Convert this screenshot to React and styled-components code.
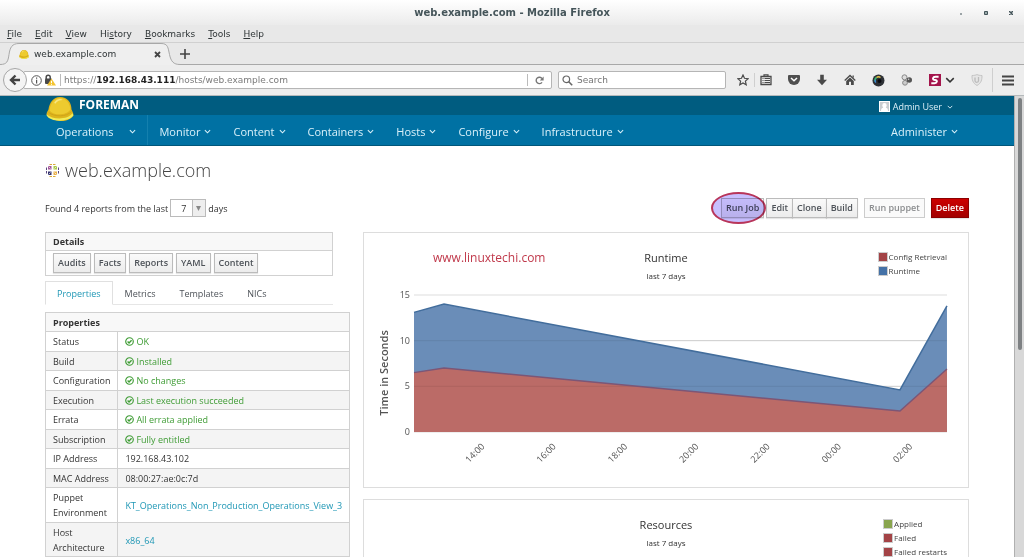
import React from 'react';
import styled, { createGlobalStyle, css } from 'styled-components';

const GlobalStyle = createGlobalStyle`
  * {
    box-sizing: border-box;
  }

  body {
    margin: 0;
    background: #fff;
    color: #333;
    font-family: "Open Sans", "Noto Sans", sans-serif;
    font-size: 9px;
    line-height: 15px;
    overflow: hidden;
  }

  button, input, select {
    font: inherit;
    color: inherit;
    margin: 0;
  }

  a {
    text-decoration: none;
  }
`;

/* ---------- browser window ---------- */

const Window = styled.div`
  display: flex;
  flex-direction: column;
  height: 100vh;
`;

const Chrome = styled.header`
  flex: none;
  background: #e8e8e8;
  border-bottom: 1px solid #b4b9bb;
  color: #2e3436;
  font-family: "DejaVu Sans", sans-serif;
  font-size: 9px;
`;

const TitleBar = styled.div`
  display: grid;
  grid-template-columns: 1fr auto 1fr;
  align-items: center;
  height: 25px;
  background: linear-gradient(#fff, #ebebeb);
`;

const WindowTitle = styled.h1`
  grid-column: 2;
  margin: 0;
  color: #45555a;
  font-size: 10px;
  font-weight: bold;
`;

const WindowControls = styled.div`
  display: flex;
  justify-content: flex-end;
  gap: 13px;
  padding-right: 7px;
`;

const ControlButton = styled.button`
  display: flex;
  align-items: center;
  justify-content: center;
  width: 12px;
  height: 12px;
  padding: 0;
  border: 0;
  background: none;
`;

const MenuBar = styled.nav`
  display: flex;
  gap: 13px;
  height: 18px;
  padding: 0 7px;
  border-bottom: 1px solid #d0d0d0;
`;

const MenuItem = styled.button`
  padding: 0;
  border: 0;
  background: none;
  line-height: 16px;
`;

const TabStrip = styled.div`
  display: flex;
  align-items: flex-end;
  height: 22px;
`;

const TabEdge = styled.svg`
  flex: none;
  width: 19px;
  height: 22px;
`;

const BrowserTab = styled.div`
  display: flex;
  align-items: center;
  width: 142px;
  height: 22px;
  border-top: 1px solid #a8a8a8;
  background: #efefef;
`;

const TabTitle = styled.span`
  flex: 1;
  margin-left: 5px;
`;

const TabButton = styled.button`
  display: flex;
  align-items: center;
  height: 22px;
  padding: 0;
  border: 0;
  background: none;
`;

const StripRest = styled.div`
  display: flex;
  flex: 1;
  height: 22px;
  border-bottom: 1px solid #a8a8a8;
`;

const Toolbar = styled.div`
  display: flex;
  align-items: center;
  height: 30px;
  padding: 0 10px 0 3px;
  background: #ededed;
`;

const BackButton = styled.button`
  display: flex;
  align-items: center;
  justify-content: center;
  flex: none;
  width: 24px;
  height: 24px;
  padding: 0;
  border: 1px solid #a6a6a6;
  border-radius: 50%;
  background: #f4f4f4;
  z-index: 1;
`;

const Field = styled.div`
  display: flex;
  align-items: center;
  height: 18px;
  border: 1px solid #b5b5b5;
  border-radius: 2px;
  background: #fff;
`;

const AddressField = styled(Field)`
  flex: 1;
  gap: 2px;
  margin-left: -4px;
  padding-left: 7px;
`;

const Address = styled.div`
  flex: 1;
  margin-left: 2px;
  padding-left: 3px;
  border-left: 1px solid #bbb;
  color: #7b7b7b;
  line-height: 12px;

  b {
    color: #222;
  }
`;

const ReloadButton = styled.button`
  display: flex;
  align-items: center;
  justify-content: center;
  width: 24px;
  height: 12px;
  padding: 0;
  border: 0;
  border-left: 1px solid #bbb;
  background: none;
`;

const SearchField = styled(Field)`
  width: 168px;
  margin-left: 6px;
  padding-left: 3px;
`;

const SearchInput = styled.input`
  flex: 1;
  min-width: 0;
  padding: 0 4px;
  border: 0;
  outline: 0;
  background: none;

  &::placeholder {
    color: #757575;
    opacity: 1;
  }
`;

const ToolIcons = styled.div`
  display: flex;
  align-items: center;
  gap: 16px;
  padding-left: 11px;
`;

const ToolButton = styled.button`
  display: flex;
  align-items: center;
  justify-content: center;
  padding: 0;
  border: 0;
  background: none;
`;

const ToolGroup = styled.div`
  display: flex;
  align-items: center;
  gap: ${(props) => props.$gap}px;
`;

const ToolDivider = styled.span`
  width: 1px;
  height: ${(props) => props.$height || 14}px;
  background: #cfcfcf;
`;

const Viewport = styled.div`
  flex: 1;
  display: flex;
  min-height: 0;
`;

const Page = styled.div`
  flex: 1;
  min-width: 0;
  overflow: hidden;
`;

const ScrollTrack = styled.div`
  flex: none;
  width: 10px;
  padding: 2px 2px 0 3px;
  border-left: 1px solid #b0b0b0;
  background: #d8d8d8;
`;

const ScrollThumb = styled.div`
  width: 4px;
  height: 55%;
  border-radius: 2px;
  background: #7e8183;
`;

/* ---------- Foreman header ---------- */

const BrandBar = styled.div`
  display: flex;
  align-items: flex-start;
  justify-content: space-between;
  height: 19px;
  padding: 0 61px 0 46px;
  background: #005c80;
  color: #fff;
`;

const Brand = styled.a`
  display: flex;
  align-items: flex-start;
  gap: 5px;
  color: #fff;
  font-size: 12px;
  font-weight: bold;
  line-height: 17px;
`;

const Helmet = styled.svg`
  position: relative;
  width: 28px;
  height: 24px;
  margin-top: 1px;
`;

const UserMenu = styled.button`
  display: flex;
  align-items: center;
  gap: 3px;
  height: 21px;
  padding: 0;
  border: 0;
  background: none;
  color: #dcf0f8;

  svg:last-child {
    margin-left: 2px;
  }
`;

const NavBar = styled.nav`
  display: flex;
  height: 31px;
  padding: 0 45px;
  border-bottom: 1px solid #00567a;
  background: #0071a3;
`;

const NavItem = styled.button`
  display: flex;
  align-items: center;
  gap: 4px;
  padding: 3px 11px 0;
  border: 0;
  background: none;
  color: #d9f1fa;
  font-size: 11px;

  &:last-child {
    margin-left: auto;
  }

  ${(props) =>
    props.$context &&
    css`
      gap: 16px;
      border-right: 1px solid #1480ae;
    `}
`;

/* ---------- page body ---------- */

const Content = styled.main`
  padding: 10px 45px 0;
`;

const HostTitle = styled.h2`
  display: flex;
  align-items: center;
  gap: 5px;
  margin: 0;
  color: #444;
  font-size: 18px;
  font-weight: 300;
  line-height: 28px;
`;

const ActionsRow = styled.div`
  display: flex;
  align-items: center;
  justify-content: space-between;
  height: 20px;
  margin: 14px 0;
`;

const Range = styled.label`
  display: flex;
  align-items: center;
  gap: 2px;
`;

const DaysBox = styled.span`
  display: flex;
  align-items: center;
  width: 36px;
  height: 18px;
  border: 1px solid #bbb;
  background: linear-gradient(to right, #fff 21px, #bbb 21px, #bbb 22px, #eee 22px);
`;

const DaysSelect = styled.select`
  flex: 1;
  min-width: 0;
  height: 16px;
  padding: 0 0 0 10px;
  border: 0;
  appearance: none;
  background: none;
`;

const Actions = styled.div`
  display: flex;
  align-items: center;
  gap: 6px;
`;

const ButtonGroup = styled.div`
  display: flex;

  button + button {
    margin-left: -1px;
  }
`;

const Button = styled.button`
  height: 20px;
  padding: 0 4px;
  border: 1px solid #bbb;
  background: linear-gradient(#fafafa, #ececec);
  box-shadow: 0 1px 1px rgba(0, 0, 0, 0.1);
  color: #4d5258;
  font-weight: 600;
  line-height: 18px;
  white-space: nowrap;

  &:disabled {
    border-color: #ccc;
    background: #fafafa;
    box-shadow: none;
    color: #8b8d8f;
  }

  ${(props) =>
    props.$danger &&
    css`
      border-color: #8b0000;
      background: linear-gradient(#c00, #a30000);
      color: #fff;
    `}
`;

const Highlighted = styled.div`
  position: relative;
  display: flex;
  margin-right: -4px;
`;

const HighlightRing = styled.span`
  position: absolute;
  inset: -6px -2px -6px -10px;
  border: 2px solid #b8355a;
  border-radius: 50%;
  background: #c8bfff;
  mix-blend-mode: multiply;
  pointer-events: none;
`;

const Columns = styled.div`
  display: flex;
  margin: 0 -15px;
`;

const Column = styled.div`
  flex: 0 0 ${(props) => (props.$span / 12) * 100}%;
  min-width: 0;
  padding: 0 15px;
`;

const DetailsBox = styled.section`
  border: 1px solid #d1d1d1;
`;

const DetailsTitle = styled.h3`
  margin: 0;
  padding: 1px 7px;
  border-bottom: 1px solid #d1d1d1;
  background: #f8f8f8;
  font-size: 9px;
  font-weight: 700;
`;

const DetailsButtons = styled.div`
  display: flex;
  gap: 3px;
  padding: 2px 7px;
`;

const Tabs = styled.div`
  display: flex;
  height: 24px;
  margin: 5px 0 7px;
  border-bottom: 1px solid #e6e6e6;
`;

const Tab = styled.button`
  height: 24px;
  padding: 0 11px;
  border: 1px solid transparent;
  background: none;
  color: #4d5258;

  ${(props) =>
    props.$active &&
    css`
      border-color: #e0e0e0;
      border-bottom-color: #fff;
      color: #1f97b5;
    `}
`;

const PropertyTable = styled.table`
  border-collapse: collapse;

  th, td {
    padding: 2px 7px;
    border: 1px solid #d1d1d1;
    font-weight: 400;
    text-align: left;
  }

  thead th {
    padding-bottom: 1px;
    background: #f8f8f8;
    font-weight: 700;
  }

  tbody th {
    width: 73px;
  }

  td {
    white-space: nowrap;
  }

  tbody tr:nth-child(even) > * {
    padding-bottom: 1px;
    background: #f4f4f4;
  }
`;

const Ok = styled.span`
  display: flex;
  align-items: center;
  gap: 2px;
  color: #3f9c35;
`;

const TextLink = styled.a`
  color: #1f97b5;
`;

const ChartPanel = styled.section`
  margin-bottom: 11px;
  padding: 17px 11px 0;
  border: 1px solid #ddd;
`;

const ChartHeader = styled.div`
  display: grid;
  grid-template-columns: 1fr auto 1fr;
  align-items: start;
  padding: 0 10px;
`;

const Watermark = styled.span`
  padding-left: 48px;
  color: #c0394b;
  font-size: 12px;
`;

const ChartTitle = styled.h3`
  grid-column: 2;
  margin: 0;
  font-size: 11px;
  font-weight: 400;
  text-align: center;

  small {
    display: block;
    margin-top: 3px;
    font-size: 8px;
  }
`;

const Legend = styled.ul`
  justify-self: end;
  margin: 0;
  padding: 0;
  color: #444;
  font-size: 8px;
  line-height: 14px;
  list-style: none;

  li {
    display: flex;
    align-items: center;
    gap: 1px;
  }
`;

const Swatch = styled.span`
  width: 10px;
  height: 10px;
  border: 1px solid #ccc;
  background: ${(props) => props.$color};
`;

const Plot = styled.svg`
  display: block;
  width: 100%;
  height: auto;
  margin-top: 4px;
  font-family: "Open Sans", sans-serif;
  font-size: 9px;
  fill: #545454;
`;

/* ---------- icons ---------- */

const Chevron = ({ size = 7, color = 'currentColor' }) => (
  <svg width={size} height={size} viewBox="0 0 8 8">
    <path d="M1 2.5l3 3 3-3" fill="none" stroke={color} strokeWidth="1.2" />
  </svg>
);

const HelmetShape = () => (
  <>
    <path d="M0 18c0-2 1-3 2-5C3 6 7 0 14 0c8 0 12 6 12 13 1 2 2 4 2 6-2 4-7 6-13 6S2 22 0 18z" fill="#dfb51c" />
    <path d="M3 14C4 7 8 1 14 1c7 0 10 6 11 12-4 6-17 7-22 1z" fill="#edcb2f" />
    <path d="M8 6c2-4 6-5 9-3-3 0-6 1-8 4z" fill="#f8e684" />
    <path d="M0 18c6 6 22 6 27-1l1 2c-4 7-24 8-28 0z" fill="#f1ec58" />
    <path d="M2 16c6 5 19 5 24-1" fill="none" stroke="#cda21a" />
  </>
);

const OkIcon = () => (
  <svg width="9" height="9" viewBox="0 0 10 10" fill="none" stroke="#3f9c35">
    <circle cx="5" cy="5" r="4.2" strokeWidth="1.3" />
    <path d="M2.9 5l1.6 1.6 2.8-2.9" strokeWidth="1.5" />
  </svg>
);

const CentosIcon = () => (
  <svg width="15" height="15" viewBox="0 0 15 15">
    <path d="M3 3h3.5v3.500H3z" fill="#a2569a" />
    <path d="M8.5 3H12v3.500H8.500z" fill="#a9c94a" />
    <path d="M3 8.500h3.500V12H3z" fill="#34336f" />
    <path d="M8.500 8.500H12V12H8.500z" fill="#e9b04a" />
    <path d="M4 2l1-1h5l1 1zM4 13l1 1h5l1-1z" fill="#d9a93c" />
    <path d="M2 4L1 5v5l1 1zM13 4l1 1v5l-1 1z" fill="#5b4a80" />
    <path d="M7.500 1v13M1 7.500h13" stroke="#fff" />
    <path d="M3.500 3.500l2 2M11.500 3.500l-2 2M3.500 11.500l2-2M11.500 11.500l-2-2" stroke="#fff" strokeWidth="0.700" />
  </svg>
);

const BackIcon = () => (
  <svg width="12" height="12" viewBox="0 0 12 12" fill="none" stroke="#444" strokeWidth="2.4">
    <path d="M6.5 1.5L2 6l4.5 4.5M2.5 6H11" />
  </svg>
);

const InfoIcon = () => (
  <svg width="11" height="11" viewBox="0 0 11 11">
    <circle cx="5.5" cy="5.5" r="4.8" fill="none" stroke="#555" />
    <path d="M5 2.5h1.2v1.2H5zM5 4.7h1.2v3.8H5z" fill="#555" />
  </svg>
);

const LockWarningIcon = () => (
  <svg width="12" height="12" viewBox="0 0 12 12">
    <path d="M2.2 5V3.3a2 2 0 014 0V5" fill="none" stroke="#4a4a4a" strokeWidth="1.5" />
    <rect x="1" y="4.5" width="7" height="5.5" rx="1" fill="#4a4a4a" />
    <path d="M7.5 4.5l4.5 7H3z" fill="#f4c430" />
    <path d="M7.5 6.8v2.4M7.5 10v.8" stroke="#fff" />
  </svg>
);

const ReloadIcon = () => (
  <svg width="9" height="9" viewBox="0 0 9 9">
    <path d="M7 6.3A3.2 3.2 0 117 2.6" fill="none" stroke="#777" strokeWidth="1.4" />
    <path d="M8.6.5v4H4.8z" fill="#777" />
  </svg>
);

const SearchIcon = () => (
  <svg width="11" height="11" viewBox="0 0 11 11" fill="none" stroke="#666">
    <circle cx="4.3" cy="4.3" r="3.3" strokeWidth="1.2" />
    <path d="M6.8 6.8l3.4 3.4" strokeWidth="1.6" />
  </svg>
);

const StarIcon = () => (
  <svg width="12" height="12" viewBox="0 0 12 12">
    <path
      d="M6 1l1.5 3.3 3.6.4-2.7 2.4.8 3.6L6 8.9l-3.2 1.8.8-3.6L.9 4.7l3.6-.4z"
      fill="none"
      stroke="#4a4a4a"
      strokeWidth="1.2"
    />
  </svg>
);

const LibraryIcon = () => (
  <svg width="12" height="12" viewBox="0 0 12 12" fill="none" stroke="#4a4a4a">
    <path d="M1 2.5h10v8H1z" strokeWidth="1.3" />
    <path d="M4 2V.8h4V2" strokeWidth="1.2" />
    <path d="M2.5 4.5h1M4.5 4.5H10M2.5 6.5h1M4.5 6.5H10M2.5 8.5h1M4.5 8.5H10" />
  </svg>
);

const PocketIcon = () => (
  <svg width="12" height="12" viewBox="0 0 12 12">
    <path d="M1 1h10a1 1 0 011 1v3a6 6 0 01-12 0V2a1 1 0 011-1z" fill="#4f4f4f" />
    <path d="M3 4l3 2.8L9 4" fill="none" stroke="#fff" strokeWidth="1.5" />
  </svg>
);

const DownloadIcon = () => (
  <svg width="12" height="12" viewBox="0 0 12 12">
    <path d="M4.2.8h3.6v5H11L6 11.2 1 5.8h3.2z" fill="#4a4a4a" />
  </svg>
);

const HomeIcon = () => (
  <svg width="12" height="12" viewBox="0 0 12 12">
    <path d="M.7 6.5L6 1.5l5.3 5" fill="none" stroke="#4a4a4a" strokeWidth="1.3" />
    <path d="M2.2 7L6 3.5 9.8 7v4H7V7.8H5V11H2.2zM8.5 1.5h1.3v2.5l-1.3-1z" fill="#4a4a4a" />
  </svg>
);

const CameraIcon = () => (
  <svg width="13" height="13" viewBox="0 0 13 13">
    <circle cx="6.5" cy="6.5" r="6" fill="#2d3035" />
    <path d="M3.2 7.5A3.5 3.5 0 014.5 3.5" fill="none" stroke="#35b878" strokeWidth="1.6" />
    <path d="M4.5 3.5a3.5 3.5 0 014 0" fill="none" stroke="#e7c74b" strokeWidth="1.4" />
    <path d="M3.8 8.7A3.5 3.5 0 013.2 6" fill="none" stroke="#3d84d8" strokeWidth="1.4" />
    <circle cx="7.5" cy="7" r="2" fill="#090b10" />
  </svg>
);

const BallsIcon = () => (
  <svg width="12" height="12" viewBox="0 0 12 12">
    <circle cx="3.5" cy="3.3" r="2.5" fill="#ddd" stroke="#888" />
    <circle cx="4" cy="8.8" r="2.4" fill="#ccc" stroke="#888" />
    <circle cx="8.3" cy="6" r="2.7" fill="#555" />
    <circle cx="7.6" cy="5.3" r=".8" fill="#ccc" />
  </svg>
);

const StylishIcon = () => (
  <svg width="12" height="12" viewBox="0 0 12 12">
    <rect width="12" height="12" fill="#a4154c" />
    <path
      d="M9.6 2.8H6.5C5 2.8 4.2 3.4 4 4.3S4.6 5.9 6 6s2.1.6 1.9 1.5-1 1.7-2.4 1.7H2.3"
      fill="none"
      stroke="#fff"
      strokeWidth="1.9"
    />
  </svg>
);

const ShieldIcon = () => (
  <svg width="12" height="12" viewBox="0 0 12 12">
    <path d="M1 1.5c2 0 4-.3 5-1 1 .7 3 1 5 1 0 4-.5 7.5-5 10-4.5-2.5-5-6-5-10z" fill="#e5e5e5" stroke="#c4c4c4" />
    <path d="M4 3.5v3.3c0 2 3.5 2 3.5 0V3" fill="none" stroke="#bbb" strokeWidth="1.3" />
  </svg>
);

const MenuIcon = () => (
  <svg width="12" height="11" viewBox="0 0 12 11" stroke="#444" strokeWidth="2">
    <path d="M0 1.5h12M0 5.5h12M0 9.5h12" />
  </svg>
);

const AvatarIcon = () => (
  <svg width="11" height="11" viewBox="0 0 11 11">
    <rect width="11" height="11" fill="#fff" />
    <rect x="1" y="1" width="9" height="9" fill="#c9cdd0" />
    <path d="M5.5 2a2.2 2.2 0 012.2 2.2c0 1.2-.6 2-1 2.4C8 7 9 7.8 9 10H2c0-2.2 1-3 2.3-3.4-.4-.4-1-1.2-1-2.4A2.2 2.2 0 015.5 2z" fill="#fff" />
  </svg>
);

/* ---------- data ---------- */

const menus = ['File', 'Edit', 'View', 'History', 'Bookmarks', 'Tools', 'Help'];

const navItems = ['Monitor', 'Content', 'Containers', 'Hosts', 'Configure', 'Infrastructure', 'Administer'];

const properties = [
  { name: 'Status', ok: 'OK' },
  { name: 'Build', ok: 'Installed' },
  { name: 'Configuration', ok: 'No changes' },
  { name: 'Execution', ok: 'Last execution succeeded' },
  { name: 'Errata', ok: 'All errata applied' },
  { name: 'Subscription', ok: 'Fully entitled' },
  { name: 'IP Address', text: '192.168.43.102' },
  { name: 'MAC Address', text: '08:00:27:ae:0c:7d' },
  { name: 'Puppet Environment', link: 'KT_Operations_Non_Production_Operations_View_3' },
  { name: 'Host Architecture', link: 'x86_64' },
];

// x position in the plot, seconds
const runtime = [[39, 13.1], [69, 14], [525, 4.6], [572, 13.8]];
const configRetrieval = [[39, 6.5], [69, 7], [525, 2.3], [572, 6.9]];

const hours = ['14:00', '16:00', '18:00', '20:00', '22:00', '00:00', '02:00'];

const BASELINE = 145;
const toY = (seconds) => BASELINE - (seconds * 137) / 15;
const toPoints = (series) => series.map(([x, value]) => `${x},${toY(value)}`).join(' ');

/* ---------- components ---------- */

const BrowserChrome = () => (
  <Chrome>
    <TitleBar>
      <WindowTitle>web.example.com - Mozilla Firefox</WindowTitle>
      <WindowControls>
        <ControlButton aria-label="Minimize">
          <svg width="4" height="4"><path d="M1 3h2" stroke="#45555a" /></svg>
        </ControlButton>
        <ControlButton aria-label="Maximize">
          <svg width="4" height="4"><path d="M.5.5h3v3h-3z" fill="#9aa" stroke="#45555a" /></svg>
        </ControlButton>
        <ControlButton aria-label="Close">
          <svg width="4" height="4"><path d="M0 0l4 4M4 0L0 4" stroke="#45555a" strokeWidth="1.5" /></svg>
        </ControlButton>
      </WindowControls>
    </TitleBar>
    <MenuBar>
      {menus.map((menu) =>
        menu === 'History' ? (
          <MenuItem key={menu}>Hi<u>s</u>tory</MenuItem>
        ) : (
          <MenuItem key={menu}><u>{menu[0]}</u>{menu.slice(1)}</MenuItem>
        )
      )}
    </MenuBar>
    <TabStrip>
      <TabEdge viewBox="0 0 19 22">
        <path d="M0 21.5c7 0 8-3 9-10S12 .5 19 .5V22H0z" fill="#efefef" />
        <path d="M0 21.5c7 0 8-3 9-10S12 .5 19 .5" fill="none" stroke="#a8a8a8" />
      </TabEdge>
      <BrowserTab>
        <svg width="10" height="9" viewBox="0 0 28 25"><HelmetShape /></svg>
        <TabTitle>web.example.com</TabTitle>
        <TabButton aria-label="Close tab">
          <svg width="7" height="7" viewBox="0 0 7 7"><path d="M1 1l5 5M6 1L1 6" stroke="#444" strokeWidth="1.8" /></svg>
        </TabButton>
      </BrowserTab>
      <TabEdge viewBox="0 0 19 22">
        <path d="M0 .5c7 0 7 4 8.5 11s4 10 10.5 10v.5H0z" fill="#efefef" />
        <path d="M0 .5c7 0 7 4 8.5 11s4 10 10.5 10" fill="none" stroke="#a8a8a8" />
      </TabEdge>
      <StripRest>
        <TabButton aria-label="New tab">
          <svg width="10" height="10" viewBox="0 0 10 10"><path d="M5 0v10M0 5h10" stroke="#444" strokeWidth="1.6" /></svg>
        </TabButton>
      </StripRest>
    </TabStrip>
    <Toolbar>
      <BackButton aria-label="Back"><BackIcon /></BackButton>
      <AddressField>
        <InfoIcon />
        <LockWarningIcon />
        <Address>https://<b>192.168.43.111</b>/hosts/web.example.com</Address>
        <ReloadButton aria-label="Reload"><ReloadIcon /></ReloadButton>
      </AddressField>
      <SearchField as="label">
        <SearchIcon />
        <SearchInput type="text" placeholder="Search" aria-label="Search" />
      </SearchField>
      <ToolIcons>
        <ToolGroup $gap={5}>
          <ToolButton aria-label="Bookmark"><StarIcon /></ToolButton>
          <ToolDivider />
          <ToolButton aria-label="Bookmarks list"><LibraryIcon /></ToolButton>
        </ToolGroup>
        <ToolButton aria-label="Pocket"><PocketIcon /></ToolButton>
        <ToolButton aria-label="Downloads"><DownloadIcon /></ToolButton>
        <ToolButton aria-label="Home"><HomeIcon /></ToolButton>
        <ToolButton aria-label="Capture"><CameraIcon /></ToolButton>
        <ToolButton aria-label="Add-on"><BallsIcon /></ToolButton>
        <ToolGroup $gap={4}>
          <ToolButton aria-label="Scripts"><StylishIcon /></ToolButton>
          <ToolButton aria-label="Scripts menu"><Chevron size={10} color="#333" /></ToolButton>
        </ToolGroup>
        <ToolGroup $gap={9}>
          <ToolButton aria-label="Shield"><ShieldIcon /></ToolButton>
          <ToolDivider $height={24} />
          <ToolButton aria-label="Menu"><MenuIcon /></ToolButton>
        </ToolGroup>
      </ToolIcons>
    </Toolbar>
  </Chrome>
);

const ForemanHeader = () => (
  <>
    <BrandBar>
      <Brand href="#">
        <Helmet viewBox="0 0 28 25"><HelmetShape /></Helmet>
        FOREMAN
      </Brand>
      <UserMenu>
        <AvatarIcon />
        Admin User
        <Chevron size={6} />
      </UserMenu>
    </BrandBar>
    <NavBar>
      <NavItem $context>Operations <Chevron /></NavItem>
      {navItems.map((item) => (
        <NavItem key={item}>{item} <Chevron /></NavItem>
      ))}
    </NavBar>
  </>
);

const HostDetails = () => (
  <>
    <DetailsBox>
      <DetailsTitle>Details</DetailsTitle>
      <DetailsButtons>
        {['Audits', 'Facts', 'Reports', 'YAML', 'Content'].map((label) => (
          <Button key={label}>{label}</Button>
        ))}
      </DetailsButtons>
    </DetailsBox>
    <Tabs role="tablist">
      {['Properties', 'Metrics', 'Templates', 'NICs'].map((label, i) => (
        <Tab key={label} role="tab" aria-selected={i === 0} $active={i === 0}>{label}</Tab>
      ))}
    </Tabs>
    <PropertyTable>
      <thead>
        <tr><th colSpan="2">Properties</th></tr>
      </thead>
      <tbody>
        {properties.map(({ name, ok, text, link }) => (
          <tr key={name}>
            <th scope="row">{name}</th>
            <td>
              {ok && <Ok><OkIcon />{ok}</Ok>}
              {text}
              {link && <TextLink href="#">{link}</TextLink>}
            </td>
          </tr>
        ))}
      </tbody>
    </PropertyTable>
  </>
);

const Chart = ({ title, watermark, legend, children }) => (
  <ChartPanel>
    <ChartHeader>
      {watermark && <Watermark>{watermark}</Watermark>}
      <ChartTitle>{title}<small>last 7 days</small></ChartTitle>
      <Legend>
        {legend.map(([label, color]) => (
          <li key={label}><Swatch $color={color} />{label}</li>
        ))}
      </Legend>
    </ChartHeader>
    {children}
  </ChartPanel>
);

const RuntimePlot = () => (
  <Plot viewBox="0 0 582 200">
    {[0, 5, 10, 15].map((tick) => (
      <React.Fragment key={tick}>
        <text x="35" y={toY(tick) + 3} textAnchor="end">{tick}</text>
        <path d={`M39 ${toY(tick)}H572`} stroke="#ddd" />
      </React.Fragment>
    ))}
    <polygon points={`39,${BASELINE} ${toPoints(runtime)} 572,${BASELINE}`} fill="#6a8db8" />
    <polygon points={`39,${BASELINE} ${toPoints(configRetrieval)} 572,${BASELINE}`} fill="#bb6b67" />
    {[5, 10].map((tick) => (
      <path key={tick} d={`M39 ${toY(tick)}H572`} stroke="#000" strokeOpacity="0.08" />
    ))}
    <polyline points={toPoints(runtime)} fill="none" stroke="#426d9c" strokeWidth="1.5" />
    <polyline points={toPoints(configRetrieval)} fill="none" stroke="#7c5676" strokeWidth="1.5" />
    {hours.map((hour, i) => {
      const x = 100 + i * 71.3;
      return (
        <text key={hour} x={x} y="169" textAnchor="middle" transform={`rotate(-45 ${x} 166)`}>{hour}</text>
      );
    })}
    <text x="13" y="86" fontSize="11" fontWeight="600" textAnchor="middle" transform="rotate(-90 13 86)">
      Time in Seconds
    </text>
  </Plot>
);

const App = () => (
  <Window>
    <GlobalStyle />
    <BrowserChrome />
    <Viewport>
      <Page>
        <ForemanHeader />
        <Content>
          <HostTitle><CentosIcon />web.example.com</HostTitle>
          <ActionsRow>
            <Range>
              Found 4 reports from the last
              <DaysBox>
                <DaysSelect defaultValue="7"><option>7</option></DaysSelect>
                <svg width="12" height="5" viewBox="0 0 12 5"><path d="M3 0h5L5.5 5z" fill="#888" /></svg>
              </DaysBox>
              days
            </Range>
            <Actions>
              <Highlighted>
                <Button>Run Job</Button>
                <HighlightRing />
              </Highlighted>
              <ButtonGroup>
                <Button>Edit</Button>
                <Button>Clone</Button>
                <Button>Build</Button>
              </ButtonGroup>
              <Button disabled>Run puppet</Button>
              <Button $danger>Delete</Button>
            </Actions>
          </ActionsRow>
          <Columns>
            <Column $span={4}><HostDetails /></Column>
            <Column $span={8}>
              <Chart
                title="Runtime"
                watermark="www.linuxtechi.com"
                legend={[['Config Retrieval', '#a34346'], ['Runtime', '#4572a7']]}
              >
                <RuntimePlot />
              </Chart>
              <Chart
                title="Resources"
                legend={[['Applied', '#89a54e'], ['Failed', '#a34346'], ['Failed restarts', '#a34346']]}
              />
            </Column>
          </Columns>
        </Content>
      </Page>
      <ScrollTrack><ScrollThumb /></ScrollTrack>
    </Viewport>
  </Window>
);

export default App;
